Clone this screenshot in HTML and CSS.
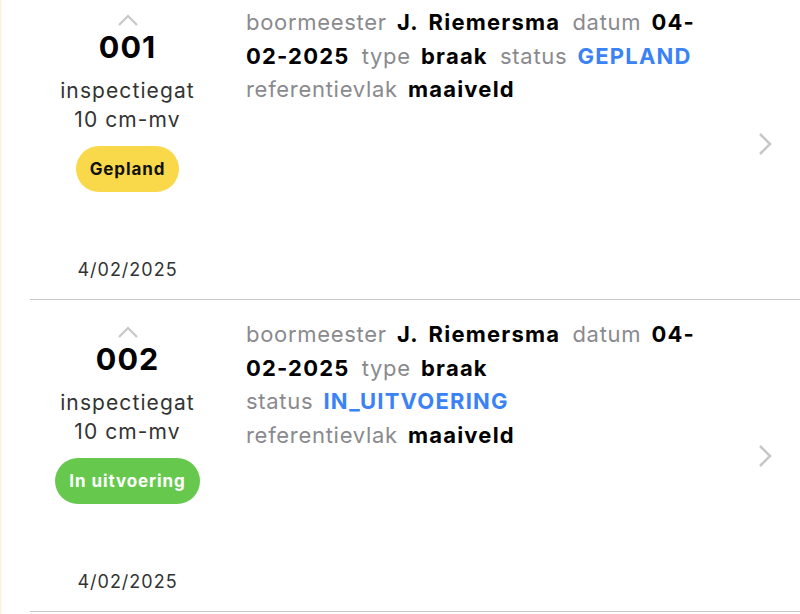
FILE: index.html
```html
<!DOCTYPE html>
<html lang="nl">
<head>
<meta charset="utf-8">
<title>Inspectiegaten</title>
<link rel="stylesheet" href="styles.css">
</head>
<body>
<div class="app">
  <ul class="list">
    <li class="row">
      <div class="left">
        <svg class="up" width="22" height="12" viewBox="0 0 22 12"><path d="M2 11 L11 2 L20 11" fill="none" stroke="#c7c7cc" stroke-width="2.2"/></svg>
        <div class="num">001</div>
        <div class="kind">inspectiegat<br>10 cm-mv</div>
        <span class="pill yellow">Gepland</span>
        <div class="date">4/02/2025</div>
      </div>
      <div class="details">
        <span class="f"><span class="lbl">boormeester</span>&nbsp;<b>J. Riemersma</b></span>
        <span class="f"><span class="lbl">datum</span>&nbsp;<b>04-02-2025</b></span>
        <span class="f"><span class="lbl">type</span>&nbsp;<b>braak</b></span>
        <span class="f"><span class="lbl">status</span>&nbsp;<b class="blue">GEPLAND</b></span>
        <span class="f"><span class="lbl">referentievlak</span>&nbsp;<b>maaiveld</b></span>
      </div>
      <div class="go">
        <svg width="16" height="24" viewBox="0 0 16 24"><path d="M3 2 L13 12 L3 22" fill="none" stroke="#c7c7cc" stroke-width="2.6"/></svg>
      </div>
    </li>
    <li class="row">
      <div class="left">
        <svg class="up" width="22" height="12" viewBox="0 0 22 12"><path d="M2 11 L11 2 L20 11" fill="none" stroke="#c7c7cc" stroke-width="2.2"/></svg>
        <div class="num">002</div>
        <div class="kind">inspectiegat<br>10 cm-mv</div>
        <span class="pill green">In uitvoering</span>
        <div class="date">4/02/2025</div>
      </div>
      <div class="details">
        <span class="f"><span class="lbl">boormeester</span>&nbsp;<b>J. Riemersma</b></span>
        <span class="f"><span class="lbl">datum</span>&nbsp;<b>04-02-2025</b></span>
        <span class="f"><span class="lbl">type</span>&nbsp;<b>braak</b></span>
        <span class="f"><span class="lbl">status</span>&nbsp;<b class="blue">IN_UITVOERING</b></span>
        <span class="f"><span class="lbl">referentievlak</span>&nbsp;<b>maaiveld</b></span>
      </div>
      <div class="go">
        <svg width="16" height="24" viewBox="0 0 16 24"><path d="M3 2 L13 12 L3 22" fill="none" stroke="#c7c7cc" stroke-width="2.6"/></svg>
      </div>
    </li>
  </ul>
</div>
</body>
</html>
```

FILE: styles.css
```css
* { box-sizing: border-box; }
html, body { margin: 0; padding: 0; background: #fff; }
body {
  font-family: Inter, "Noto Sans", sans-serif;
  color: #000;
  height: 614px;
  overflow: hidden;
}
.app {
  border-left: 2px solid #fbf5e8;
  height: 614px;
  overflow: hidden;
}
.list {
  list-style: none;
  margin: -12px 0 0 28px;
  padding: 0;
}
.row {
  display: flex;
  height: 312px;
  border-bottom: 1px solid #c8c7cc;
}
.left {
  width: 195px;
  flex: none;
  display: flex;
  flex-direction: column;
  align-items: center;
  padding-top: 26px;
  padding-bottom: 18px;
}
.up { display: block; }
.num {
  font-size: 30.5px;
  font-weight: 700;
  letter-spacing: 1px;
  line-height: 34px;
  margin-top: 4px;
}
.kind {
  font-size: 21px;
  letter-spacing: 1.1px;
  line-height: 29px;
  color: #333;
  text-align: center;
  margin-top: 12px;
}
.pill {
  display: inline-block;
  margin-top: 12px;
  height: 46px;
  line-height: 46px;
  padding: 0 14px;
  border-radius: 23px;
  font-size: 17px;
  font-weight: 700;
  letter-spacing: 0.9px;
}
.yellow { background: #f9d849; color: #111; }
.green { background: #66c94e; color: #fff; }
.date {
  margin-top: auto;
  font-size: 18px;
  letter-spacing: 1px;
  color: #333;
  line-height: 22px;
}
.details {
  flex: none;
  width: 462px;
  margin-left: 21px;
  padding-top: 18px;
  font-size: 22px;
  line-height: 33.5px;
  word-spacing: 4px;
}
.f { margin-right: 2px; }
.lbl { color: #8a8a8e; letter-spacing: 0.7px; }
.details b { font-weight: 700; letter-spacing: 1.2px; }
.blue { color: #3a82f6; }
.go {
  flex: 1;
  display: flex;
  align-items: center;
  justify-content: flex-end;
  padding-right: 27px;
}
.go svg { display: block; }
```
